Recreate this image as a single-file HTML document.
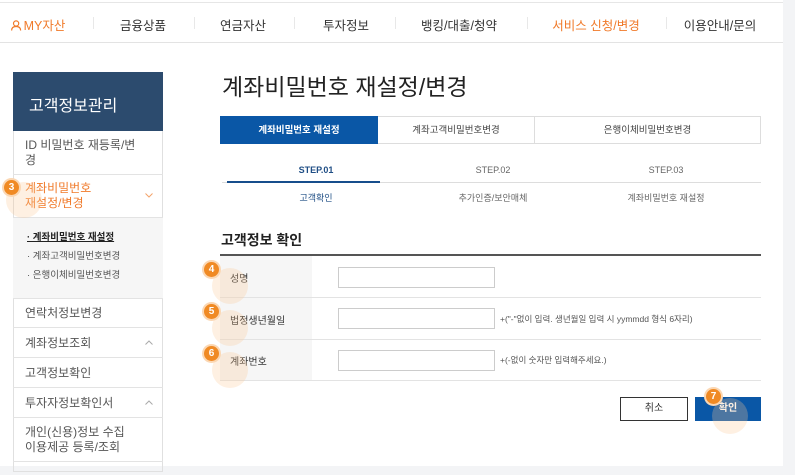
<!DOCTYPE html>
<html><head><meta charset="utf-8"><style>
*{margin:0;padding:0;box-sizing:border-box}
body{width:795px;height:475px;overflow:hidden;background:#fff;font-family:"Liberation Sans","Noto Sans CJK KR",sans-serif;color:#333;position:relative}
.a{position:absolute}
.nav{left:0;top:2px;width:783px;height:41px;border-top:1px solid #e6e6e6;border-bottom:1px solid #e3e3e3}
.nav span{position:absolute;top:12px;font-size:12.5px;color:#333;transform:translateX(-50%);white-space:nowrap}
.nav i{position:absolute;top:14px;width:1px;height:12px;background:#e8e8e8}
.rs{left:783px;top:0;width:12px;height:475px;background:#f3f4f6}
.bs{left:0;top:466px;width:795px;height:9px;background:#f3f4f6}
.side{left:13px;top:72px;width:150px;height:400px;border:1px solid #e0e0e0;border-top:none}
.sh{left:13px;top:72px;width:150px;height:59px;background:#2c4b6e;color:#fff;font-size:16px;padding:20px 0 0 16px}
.si{position:absolute;left:13px;width:150px;border-bottom:1px solid #e3e3e3;font-size:12px;color:#555;padding-left:12px;line-height:15px}
.badge{position:absolute;width:15px;height:15px;border-radius:50%;background:#f08a24;color:#fff;font-size:10px;font-weight:bold;text-align:center;line-height:15px;box-shadow:0 0 0 2px #fbd7b3}
.halo{position:absolute;width:36px;height:36px;border-radius:50%;background:rgba(250,200,150,.28)}
.tab{position:absolute;top:116px;height:28px;font-size:9.5px;text-align:center;line-height:28px;border:1px solid #ddd;color:#444}
.step{position:absolute;font-size:9px;color:#666;text-align:center;width:160px}
.row{position:absolute;left:220px;width:541px;border-bottom:1px solid #e3e3e3}
.lab{position:absolute;left:0;top:0;bottom:0;width:92px;background:#f6f6f6;font-size:10px;color:#333;padding-left:10px}
.inp{position:absolute;left:118px;width:157px;height:21px;border:1px solid #ccc;background:#fff}
.hint{position:absolute;left:280px;font-size:8.5px;color:#555}
.car{position:absolute;right:10px;top:50%;margin-top:-3px}
</style></head><body>
<div class="a nav">
<span style="left:38px;color:#f07a2a"><svg width="11" height="11" viewBox="0 0 11 11" style="vertical-align:-1px;margin-right:2px"><circle cx="5.5" cy="3.5" r="2.6" fill="none" stroke="#f07a2a" stroke-width="1.2"/><path d="M1 10.5 Q1 6.5 5.5 6.5 Q10 6.5 10 10.5" fill="none" stroke="#f07a2a" stroke-width="1.2"/></svg>MY자산</span>
<span style="left:143px">금융상품</span>
<span style="left:243px">연금자산</span>
<span style="left:346px">투자정보</span>
<span style="left:459px">뱅킹/대출/청약</span>
<span style="left:596px;color:#f07a2a">서비스 신청/변경</span>
<span style="left:720px">이용안내/문의</span>
<i style="left:93px"></i><i style="left:194px"></i><i style="left:294px"></i><i style="left:395px"></i><i style="left:527px"></i><i style="left:666px"></i>
</div>
<div class="a rs"></div><div class="a bs"></div>

<div class="a side"></div>
<div class="a sh">고객정보관리</div>
<div class="si" style="top:131px;height:44px;padding-top:7px">ID 비밀번호 재등록/변<br>경</div>
<div class="si" style="top:175px;height:43px;padding-top:6px;color:#f07a2a;padding-left:12px">계좌비밀번호<br>재설정/변경<svg class="car" width="8" height="5" viewBox="0 0 8 5"><path d="M0.5 0.5 L4 4 L7.5 0.5" fill="none" stroke="#f3a36a" stroke-width="1"/></svg></div>
<div class="si" style="top:218px;height:81px;background:#f6f6f6;font-size:9.5px;line-height:19px;padding-top:10px;padding-left:14px;color:#555"><b style="text-decoration:underline;color:#222">· 계좌비밀번호 재설정</b><br>· 계좌고객비밀번호변경<br>· 은행이체비밀번호변경</div>
<div class="si" style="top:299px;height:29px;padding-top:7px">연락처정보변경</div>
<div class="si" style="top:328px;height:30px;padding-top:8px">계좌정보조회<svg class="car" width="8" height="5" viewBox="0 0 8 5"><path d="M0.5 4.5 L4 1 L7.5 4.5" fill="none" stroke="#aaa" stroke-width="1"/></svg></div>
<div class="si" style="top:358px;height:30px;padding-top:8px">고객정보확인</div>
<div class="si" style="top:388px;height:30px;padding-top:8px">투자자정보확인서<svg class="car" width="8" height="5" viewBox="0 0 8 5"><path d="M0.5 4.5 L4 1 L7.5 4.5" fill="none" stroke="#aaa" stroke-width="1"/></svg></div>
<div class="si" style="top:418px;height:44px;padding-top:7px">개인(신용)정보 수집<br>이용제공 등록/조회</div>
<div class="halo" style="left:6px;top:182px"></div>
<div class="badge" style="left:4px;top:180px">3</div>

<div class="a" style="left:222px;top:68px;font-size:23px;color:#222">계좌비밀번호 재설정/변경</div>
<div class="tab" style="left:220px;width:158px;background:#0a57a6;color:#fff;border-color:#0a57a6;font-weight:bold">계좌비밀번호 재설정</div>
<div class="tab" style="left:378px;width:157px;border-left:none">계좌고객비밀번호변경</div>
<div class="tab" style="left:535px;width:226px;border-left:none">은행이체비밀번호변경</div>
<div class="a" style="left:222px;top:182px;width:539px;height:1px;background:#ddd"></div>
<div class="a" style="left:227px;top:181px;width:153px;height:2px;background:#174e8c"></div>
<div class="step" style="left:236px;top:165px;color:#1f4e85;font-weight:bold">STEP.01</div>
<div class="step" style="left:413px;top:165px">STEP.02</div>
<div class="step" style="left:586px;top:165px">STEP.03</div>
<div class="step" style="left:236px;top:191px;color:#1f4e85">고객확인</div>
<div class="step" style="left:413px;top:191px">추가인증/보안매체</div>
<div class="step" style="left:586px;top:191px">계좌비밀번호 재설정</div>
<div class="a" style="left:221px;top:230px;font-size:14px;font-weight:bold;color:#222">고객정보 확인</div>
<div class="a" style="left:220px;top:254px;width:541px;height:2px;background:#555"></div>
<div class="row" style="top:256px;height:42px"><div class="lab" style="padding-top:14px">성명</div><div class="inp" style="top:11px"></div></div>
<div class="row" style="top:298px;height:42px"><div class="lab" style="padding-top:14px">법정생년월일</div><div class="inp" style="top:10px"></div><div class="hint" style="top:15px">+("-"없이 입력. 생년월일 입력 시 yymmdd 형식 6자리)</div></div>
<div class="row" style="top:340px;height:41px"><div class="lab" style="padding-top:13px">계좌번호</div><div class="inp" style="top:10px"></div><div class="hint" style="top:14px">+(-없이 숫자만 입력해주세요.)</div></div>
<div class="halo" style="left:212px;top:268px"></div><div class="badge" style="left:204px;top:262px">4</div>
<div class="halo" style="left:212px;top:310px"></div><div class="badge" style="left:204px;top:304px">5</div>
<div class="halo" style="left:212px;top:352px"></div><div class="badge" style="left:204px;top:346px">6</div>
<div class="a" style="left:620px;top:397px;width:68px;height:24px;border:1px solid #333;font-size:10px;text-align:center;line-height:22px">취소</div>
<div class="a" style="left:695px;top:397px;width:66px;height:24px;background:#0a57a6;color:#fff;font-size:10px;font-weight:bold;text-align:center;line-height:24px">확인</div>
<div class="halo" style="left:712px;top:398px"></div><div class="badge" style="left:706px;top:389px">7</div>
</body></html>
